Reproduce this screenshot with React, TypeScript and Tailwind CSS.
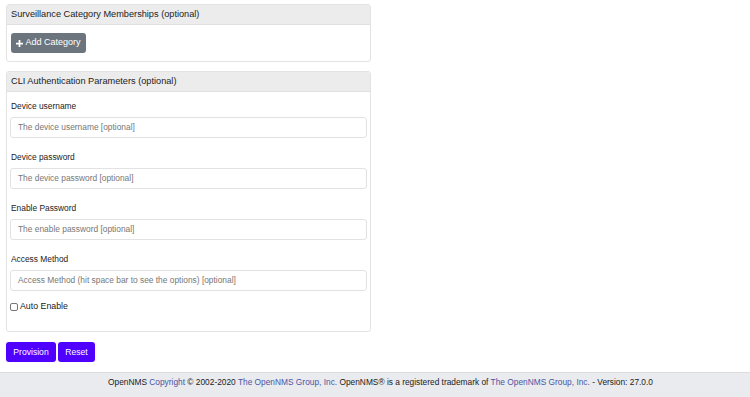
import React from 'react';

const fields = [
  { label: 'Device username', placeholder: 'The device username [optional]' },
  { label: 'Device password', placeholder: 'The device password [optional]' },
  { label: 'Enable Password', placeholder: 'The enable password [optional]' },
  { label: 'Access Method', placeholder: 'Access Method (hit space bar to see the options) [optional]' },
];

const Card: React.FC<{ title: string; children: React.ReactNode; className?: string }> = ({ title, children, className }) => (
  <div className={`w-[365px] border border-[#e3e3e3] rounded-[3px] bg-white ${className ?? ''}`}>
    <div className="h-[20px] flex items-center px-[4px] bg-[#ececec] border-b border-[#e0e0e0] text-[9.2px] text-[#222]">
      {title}
    </div>
    {children}
  </div>
);

export default function App() {
  return (
    <div className="w-[750px] h-[397px] bg-white flex flex-col" style={{ fontFamily: '"Liberation Sans", Arial, sans-serif' }}>
      <div className="flex-1 pl-[6px] pt-[4px]">
        <Card title="Surveillance Category Memberships (optional)">
          <div className="px-[4px] pt-[8px] pb-[8px]">
            <button className="h-[20px] w-[75px] justify-center rounded-[3px] bg-[#6c757d] text-white text-[9px] flex items-center gap-[2px]">
              <svg width="7" height="7" viewBox="0 0 8 8">
                <path d="M3 0h2v3h3v2H5v3H3V5H0V3h3z" fill="white" />
              </svg>
              Add Category
            </button>
          </div>
        </Card>

        <Card title="CLI Authentication Parameters (optional)" className="mt-[9px]">
          <div className="px-[3px] pt-[7px] pb-[19px] flex flex-col">
            {fields.map((f) => (
              <div key={f.label} className="flex flex-col mb-[12px]">
                <label className="pl-[1px] h-[14px] text-[8.4px] text-[#222] leading-[14px]">{f.label}</label>
                <div className="mt-[4px] h-[21px] border border-[#e2e2e2] rounded-[3px] flex items-center px-[7px] text-[8.4px] text-[#777]">
                  {f.placeholder}
                </div>
              </div>
            ))}
            <div className="flex items-center gap-[2px] -mt-[1px] h-[10px] text-[8.8px] text-[#222]">
              <span className="w-[8px] h-[8px] border border-[#777] rounded-[2px] bg-white"></span>
              Auto Enable
            </div>
          </div>
        </Card>

        <div className="flex gap-[2px] mt-[10px]">
          <button className="h-[20px] w-[50px] rounded-[3px] bg-[#5000ff] text-white text-[8.6px]">Provision</button>
          <button className="h-[20px] w-[37px] rounded-[3px] bg-[#5000ff] text-white text-[8.6px]">Reset</button>
        </div>
      </div>

      <div className="h-[25px] bg-[#e9ebee] border-t border-[#dcdcdc] flex justify-center pl-[11px] pt-[3px] text-[8.35px] text-[#222]">
        <span>
          OpenNMS <span className="text-[#4b55a6]">Copyright</span> © 2002-2020{' '}
          <span className="text-[#4b55a6]">The OpenNMS Group, Inc.</span> OpenNMS® is a registered trademark of{' '}
          <span className="text-[#4b55a6]">The OpenNMS Group, Inc.</span> - Version: 27.0.0
        </span>
      </div>
    </div>
  );
}
